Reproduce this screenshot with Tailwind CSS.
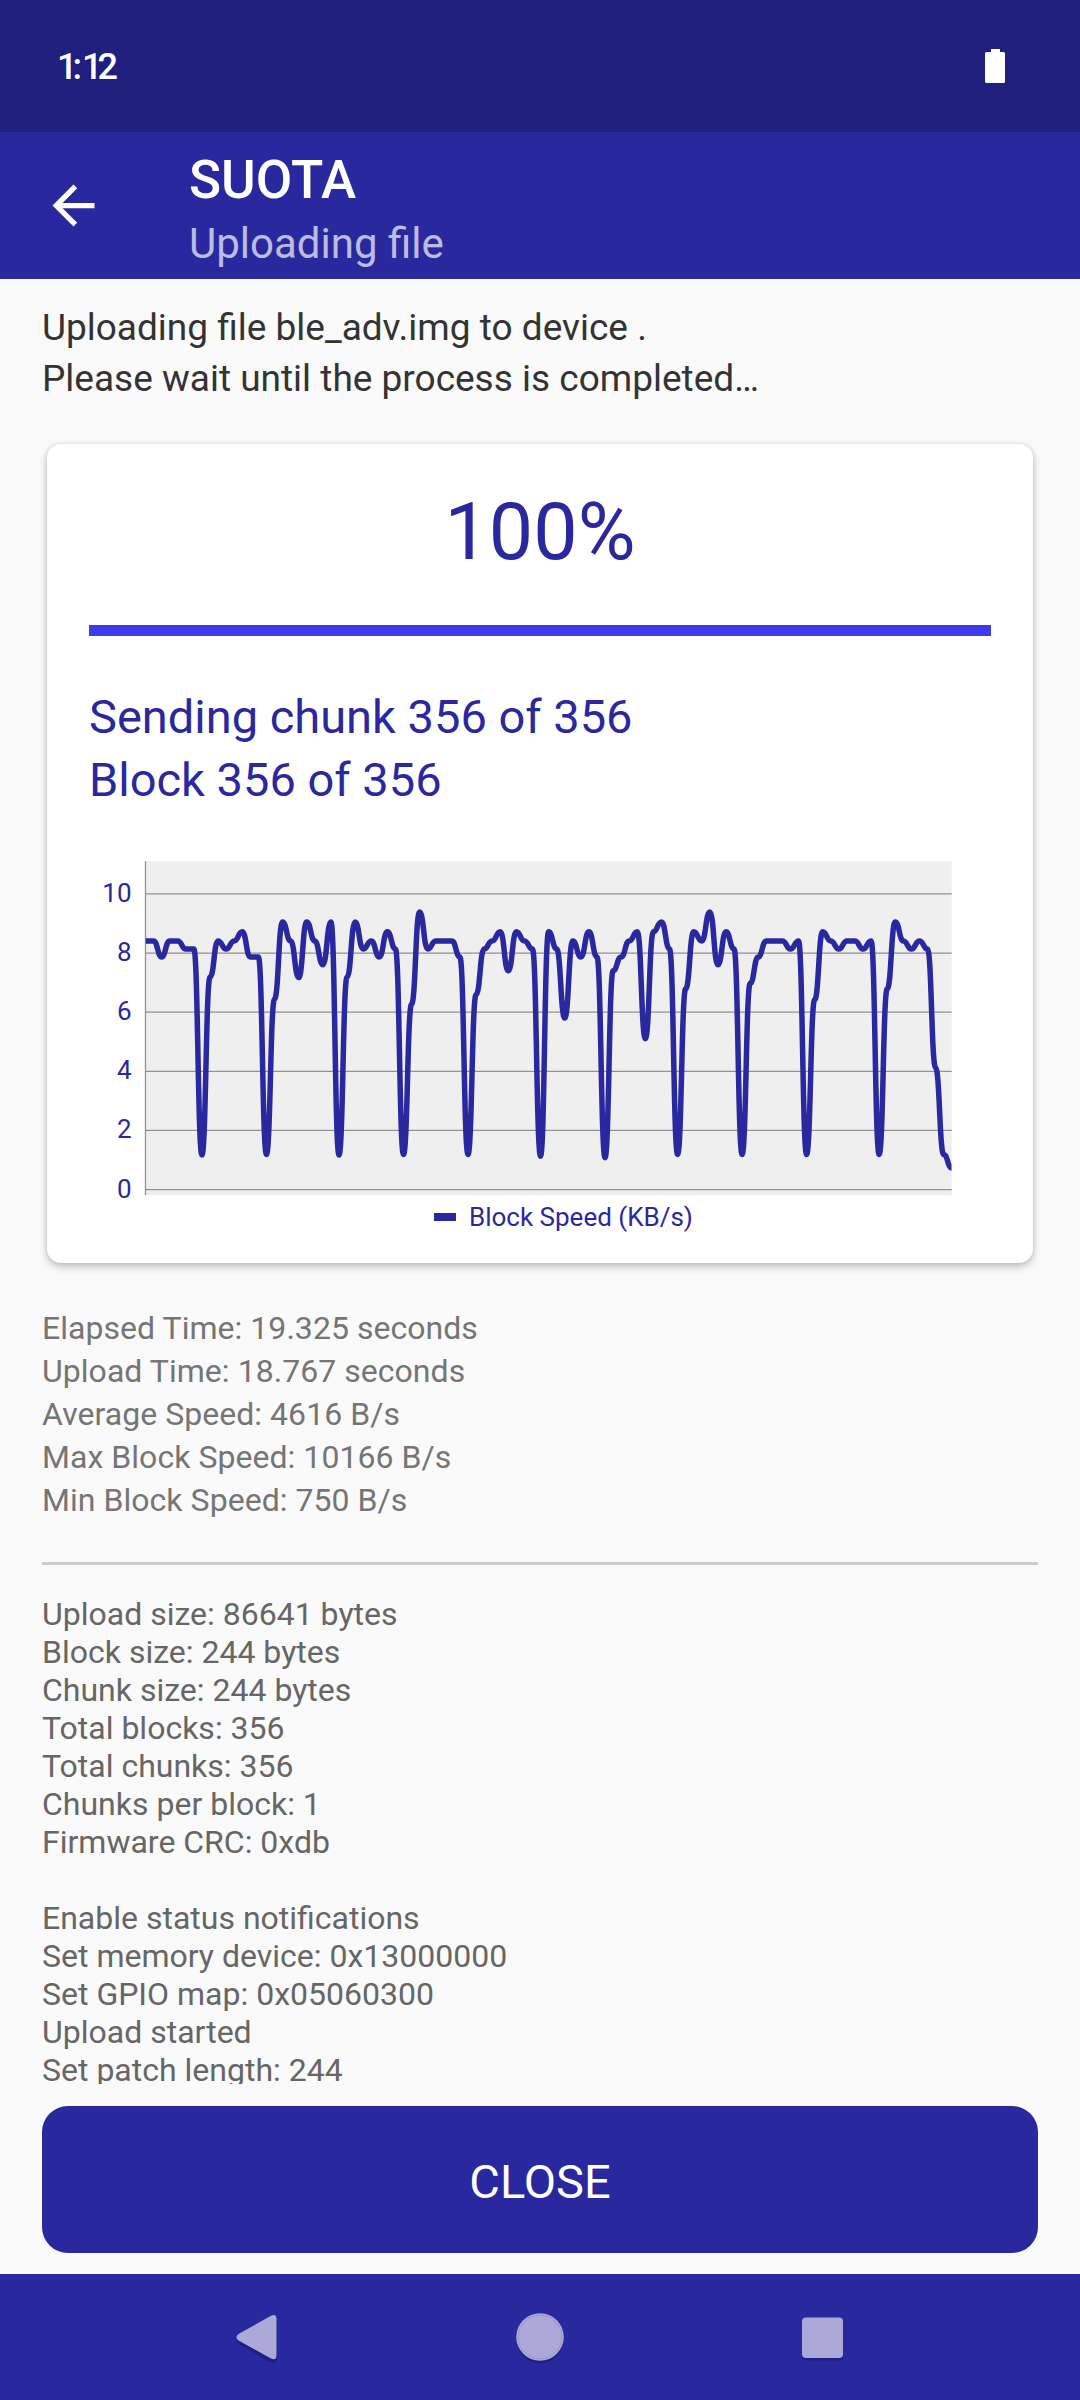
<!DOCTYPE html>
<html lang="en">
<head>
    <meta charset="UTF-8">
    <meta name="viewport" content="width=device-width, initial-scale=1.0">
    <title>SUOTA</title>
    <script src="https://cdn.jsdelivr.net/npm/@tailwindcss/browser@4"></script>
</head>
<body class="bg-[#fafafa] font-[Roboto,sans-serif] w-[1080px] h-[2400px] flex flex-col overflow-hidden">

    <!-- status bar -->
    <div class="h-[132px] shrink-0 bg-[#211f7d] text-white flex items-center justify-between pl-[57px] pr-[75px]">
        <span class="text-[36px] font-medium tracking-[-5px] pt-0.5">1<span class="tracking-normal">:</span>12</span>
        <svg class="w-5 h-[34px]" viewBox="0 0 20 34" fill="white">
            <path d="M6 0h9v3h3.500a1.500 1.500 0 0 1 1.500 1.500v28a1.500 1.500 0 0 1-1.500 1.500h-17a1.500 1.500 0 0 1-1.500-1.500v-28a1.500 1.500 0 0 1 1.500-1.500h4.500z"/>
        </svg>
    </div>

    <!-- toolbar -->
    <header class="h-[147px] shrink-0 bg-[#29289e] text-white flex">
        <svg class="w-[63px] h-[63px] ml-[42px] mt-[42px]" viewBox="0 0 24 24" fill="white">
            <path d="M20 11H7.830l5.590-5.590L12 4l-8 8 8 8 1.410-1.410L7.830 13H20v-2z"/>
        </svg>
        <div class="ml-[84px] pt-[17px]">
            <h1 class="text-[53px] leading-[62px] font-medium">SUOTA</h1>
            <p class="mt-2 text-[42px] leading-[50px] text-white/70">Uploading file</p>
        </div>
    </header>

    <main class="px-[42px] pt-[23px] flex-1 flex flex-col">
        <p class="text-[37px] leading-[51px] text-[#333333]">Uploading file ble_adv.img to device .<br>Please wait until the process is completed…</p>

        <div class="mt-10 mx-[5px] h-[819px] px-[42px] pt-[42px] bg-white rounded-[14px] shadow-[0_4px_8px_rgba(0,0,0,0.22),0_0_4px_rgba(0,0,0,0.12)] text-[#29289e]">
            <div class="text-[79px] leading-[92px] text-center">100%</div>
            <div class="mt-[47px] h-[11px] bg-[#3f3aeb]"></div>
            <p class="mt-[49px] text-[47px] leading-[63px]">Sending chunk 356 of 356<br>Block 356 of 356</p>

            <svg class="mt-10 w-[902px] h-[350px]" viewBox="0 0 902 350">
                <defs>
                    <clipPath id="plot"><rect x="56.500" y="10.300" width="806.200" height="334"/></clipPath>
                </defs>
                <rect x="56.500" y="10.300" width="806.200" height="334" fill="#efefef"/>
                <g id="grid" stroke="#929292" stroke-width="1.200"></g>
                <path d="M56.500 10.300V344.300" stroke="#929292" stroke-width="1.300"/>
                <path id="line" clip-path="url(#plot)" fill="none" stroke="#29289e" stroke-width="5.500"/>
                <g id="labels" fill="#29289e" font-size="26" text-anchor="end"></g>
            </svg>
            <div class="ml-[345px] flex items-center gap-[13px] text-[26px] leading-[31px]">
                <span class="w-[22px] h-2 bg-[#29289e]"></span>
                <span class="pt-px">Block Speed (KB/s)</span>
            </div>
        </div>

        <div class="mt-11 text-[32px] leading-[43px] tracking-[0.04px] text-[#757575]">
            <p>Elapsed Time: 19.325 seconds</p>
            <p>Upload Time: 18.767 seconds</p>
            <p>Average Speed: 4616 B/s</p>
            <p>Max Block Speed: 10166 B/s</p>
            <p>Min Block Speed: 750 B/s</p>
        </div>

        <div class="mt-10 h-[3px] shrink-0 bg-[#cbcbcb]"></div>

        <!-- log, last line is cut by the scroll area -->
        <div class="mt-[30px] h-[489px] shrink-0 overflow-hidden text-[32px] leading-[38px] text-[#666666]">
            <p>Upload size: 86641 bytes</p>
            <p>Block size: 244 bytes</p>
            <p>Chunk size: 244 bytes</p>
            <p>Total blocks: 356</p>
            <p>Total chunks: 356</p>
            <p>Chunks per block: 1</p>
            <p>Firmware CRC: 0xdb</p>
            <p>&nbsp;</p>
            <p>Enable status notifications</p>
            <p>Set memory device: 0x13000000</p>
            <p>Set GPIO map: 0x05060300</p>
            <p>Upload started</p>
            <p>Set patch length: 244</p>
        </div>

        <button class="mt-[22px] h-[147px] shrink-0 rounded-[26px] bg-[#29289e] text-white text-[47px] leading-[56px] pt-1">CLOSE</button>
    </main>

    <!-- navigation bar -->
    <nav class="h-[126px] shrink-0 bg-[#29289e]">
        <svg class="w-full h-full" viewBox="0 0 1080 126">
            <g fill="#1f1e85" transform="translate(0 2)">
                <path d="M239 60L270 42Q277 39 277 46V82Q277 89 270 86L239 68Q234 64 239 60Z"/>
                <circle cx="540" cy="63" r="24"/>
                <rect x="802" y="43.500" width="41" height="41" rx="4"/>
            </g>
            <g fill="#aca9d9">
                <path d="M238.500 60L271 41.800Q276.500 39.500 276.500 45V81Q276.500 87 271 84.500L238.500 66.500Q234.500 63.200 238.500 60Z"/>
                <circle cx="540" cy="63" r="23.800"/>
                <rect x="802" y="43.500" width="41" height="40.500" rx="4"/>
            </g>
            <circle cx="540" cy="63" r="21.800" fill="none" stroke="#8f8cc9" stroke-width="0.700"/>
        </svg>
    </nav>

    <script>
        var speeds = [
            8.41, 8.41, 7.87, 8.41, 8.41, 8.14, 8.14, 1.17, 7.18, 8.41,
            8.14, 8.41, 8.72, 7.87, 7.87, 1.19, 6.44, 9.05, 8.41, 7.17,
            9.05, 8.41, 7.6, 9.05, 1.17, 7.18, 9.05, 8.14, 8.41, 7.87,
            8.72, 8.14, 1.19, 6.27, 9.39, 8.14, 8.41, 8.41, 8.41, 7.87,
            1.19, 6.59, 8.14, 8.41, 8.72, 7.4, 8.72, 8.41, 8.14, 1.13,
            8.72, 8.14, 5.8, 8.41, 7.87, 8.72, 7.87, 1.08, 7.4, 7.87,
            8.41, 8.72, 5.1, 8.72, 9.05, 8.14, 1.19, 6.79, 8.72, 8.41,
            9.39, 7.6, 8.72, 8.14, 1.19, 6.97, 7.87, 8.41, 8.41, 8.41,
            8.14, 8.41, 1.19, 6.42, 8.72, 8.41, 8.14, 8.41, 8.41, 8.14,
            8.41, 1.19, 6.79, 9.05, 8.41, 8.14, 8.41, 8.14, 4.12, 1.19,
            0.73
        ];
        var left = 56.5, right = 862.7;
        var step = (right - left) / (speeds.length - 1);

        function getY(value) {
            return 338.6 - value * 29.57;
        }

        var grid = "", labels = "";
        for (var v = 0; v <= 10; v += 2) {
            grid += '<path d="M' + left + ' ' + getY(v) + 'H' + right + '"/>';
            labels += '<text x="42.5" y="' + (getY(v) + 8) + '">' + v + '</text>';
        }
        document.getElementById("grid").innerHTML = grid;
        document.getElementById("labels").innerHTML = labels;

        // horizontal bezier between the points
        var d = "M" + left + " " + getY(speeds[0]);
        for (var i = 1; i < speeds.length; i++) {
            var x = left + i * step;
            var mid = x - step / 2;
            d += "C" + mid + " " + getY(speeds[i - 1]) + " " + mid + " " + getY(speeds[i]) + " " + x + " " + getY(speeds[i]);
        }
        document.getElementById("line").setAttribute("d", d);
    </script>
</body>
</html>
